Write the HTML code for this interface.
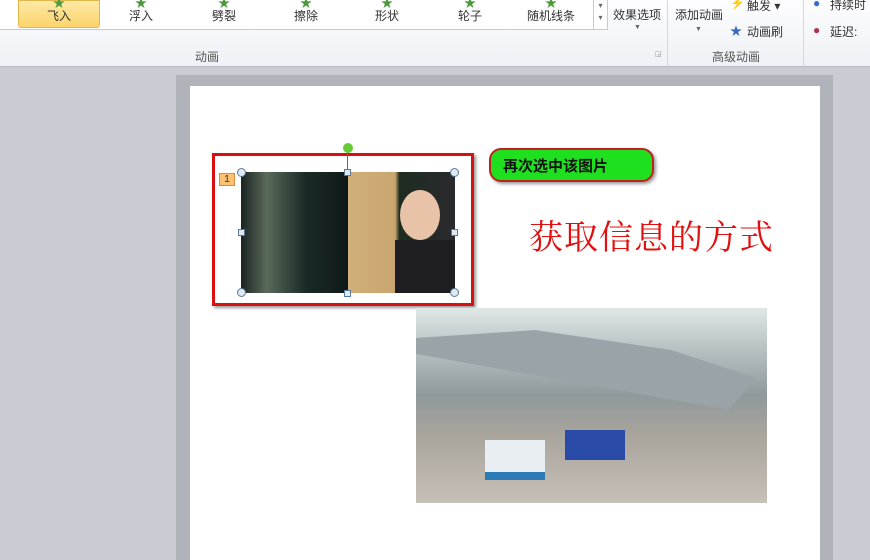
<!DOCTYPE html>
<html><head><meta charset="utf-8"><style>
*{margin:0;padding:0;box-sizing:border-box}
body{width:870px;height:560px;overflow:hidden;position:relative;background:#c9cdd3;font-family:"Liberation Sans","Noto Sans CJK SC",sans-serif;font-size:12px;color:#333}
.a{position:absolute}
.ribbon{left:0;top:0;width:870px;height:67px;background:linear-gradient(#fdfdfe,#eef1f5);border-bottom:1px solid #b6bcc6}
.gal{left:0;top:0;width:608px;height:30px;background:#fff;border-bottom:1px solid #c5cbd3;border-right:1px solid #c5cbd3}
.it{top:7px;font-size:12px;color:#333;text-align:center;width:60px}
.star{top:-6px;width:60px;text-align:center;color:#4a9a3a;font-size:12px}
.sep{top:0;width:1px;height:66px;background:#d3d8df}
.h{width:9px;height:9px;border:1px solid #5a7a9a;background:#dfe9f3;border-radius:50%}
.s{width:7px;height:7px;border:1px solid #5a7a9a;background:#dfe9f3}
</style></head><body>
<div class="a ribbon"></div>
<div class="a gal"></div>
<div class="a" style="left:18px;top:0;width:82px;height:28px;background:linear-gradient(#fde9a6,#fbd46a);border:1px solid #e3b64c;border-radius:0 0 3px 3px"></div>
<div class="a star" style="left:29px">★</div><div class="a it" style="left:29px">飞入</div>
<div class="a star" style="left:111px">★</div><div class="a it" style="left:111px">浮入</div>
<div class="a star" style="left:194px">★</div><div class="a it" style="left:194px">劈裂</div>
<div class="a star" style="left:276px">★</div><div class="a it" style="left:276px">擦除</div>
<div class="a star" style="left:357px">★</div><div class="a it" style="left:357px">形状</div>
<div class="a star" style="left:440px">★</div><div class="a it" style="left:440px">轮子</div>
<div class="a star" style="left:521px">★</div><div class="a it" style="left:521px">随机线条</div>
<div class="a" style="left:593px;top:0;width:14px;height:30px;border-left:1px solid #c5cbd3;font-size:8px;color:#666;text-align:center;line-height:12px">▾<br>▾</div>
<div class="a" style="left:613px;top:6px">效果选项</div>
<div class="a" style="left:634px;top:24px;font-size:7px;color:#666">▼</div>
<div class="a" style="left:195px;top:48px;color:#555">动画</div>
<div class="a" style="left:655px;top:50px;font-size:7px;color:#888">◲</div>
<div class="a sep" style="left:667px"></div>
<div class="a" style="left:675px;top:6px">添加动画</div>
<div class="a" style="left:695px;top:26px;font-size:7px;color:#666">▼</div>
<div class="a" style="left:730px;top:-4px;color:#e0a000">⚡</div><div class="a" style="left:747px;top:-3px">触发 ▾</div>
<div class="a" style="left:730px;top:22px;color:#3a6ac8">★</div><div class="a" style="left:747px;top:23px">动画刷</div>
<div class="a" style="left:712px;top:48px;color:#555">高级动画</div>
<div class="a sep" style="left:803px"></div>
<div class="a" style="left:813px;top:-4px;color:#3a6ac8">●</div><div class="a" style="left:830px;top:-4px">持续时</div>
<div class="a" style="left:813px;top:23px;color:#b03050">●</div><div class="a" style="left:830px;top:23px">延迟:</div>
<div class="a" style="left:176px;top:75px;width:657px;height:485px;background:#b0b4ba"></div>
<div class="a" style="left:190px;top:86px;width:630px;height:474px;background:#fff"></div>
<div class="a" style="left:212px;top:153px;width:262px;height:153px;border:3px solid #d81010;box-shadow:2px 2px 3px #999"></div>
<div class="a" style="left:347px;top:148px;width:1px;height:24px;background:#666"></div>
<div class="a" style="left:343px;top:143px;width:10px;height:10px;border-radius:50%;background:#6c3"></div>
<div class="a" style="left:219px;top:173px;width:16px;height:13px;background:#fbc070;border:1px solid #d09040;font-size:10px;text-align:center;line-height:11px">1</div>
<div class="a" style="left:241px;top:172px;width:214px;height:121px;background:linear-gradient(90deg,#1a2422 0%,#5a6a5a 12%,#1b2a26 30%,#0f1a18 50%,#d2b07a 50%,#c9a570 72%,#1d2c20 74%,#2a2a2e 100%)"></div>
<div class="a" style="left:400px;top:190px;width:40px;height:50px;border-radius:50%;background:#e8c3a8"></div>
<div class="a" style="left:395px;top:240px;width:60px;height:53px;background:#1e1e22"></div>
<div class="a h" style="left:237px;top:168px"></div><div class="a h" style="left:450px;top:168px"></div>
<div class="a h" style="left:237px;top:288px"></div><div class="a h" style="left:450px;top:288px"></div>
<div class="a s" style="left:344px;top:169px"></div><div class="a s" style="left:344px;top:290px"></div>
<div class="a s" style="left:238px;top:229px"></div><div class="a s" style="left:451px;top:229px"></div>
<div class="a" style="left:489px;top:148px;width:165px;height:34px;background:#1ee01e;border:2px solid #c02020;border-radius:12px;box-shadow:2px 2px 3px #999;font-weight:bold;font-size:15px;color:#111;padding:5px 0 0 12px">再次选中该图片</div>
<div class="a" style="left:529px;top:210px;font-family:'Noto Serif CJK SC',serif;font-size:34px;color:#e01010;letter-spacing:1px">获取信息的方式</div>
<div class="a" style="left:416px;top:308px;width:351px;height:195px;background:linear-gradient(#dfe8e6 0%,#b9c3c4 20%,#8f999c 45%,#a9a49c 65%,#c6c0b6 100%)"></div>
<div class="a" style="left:416px;top:330px;width:340px;height:80px;background:#9aa3a8;clip-path:polygon(0 10%,35% 0,75% 25%,100% 60%,92% 100%,0 30%)"></div>
<div class="a" style="left:485px;top:440px;width:60px;height:40px;background:#e8eef2;border-bottom:8px solid #2a7ab8"></div>
<div class="a" style="left:565px;top:430px;width:60px;height:30px;background:#2a4aa8"></div>
</body></html>
